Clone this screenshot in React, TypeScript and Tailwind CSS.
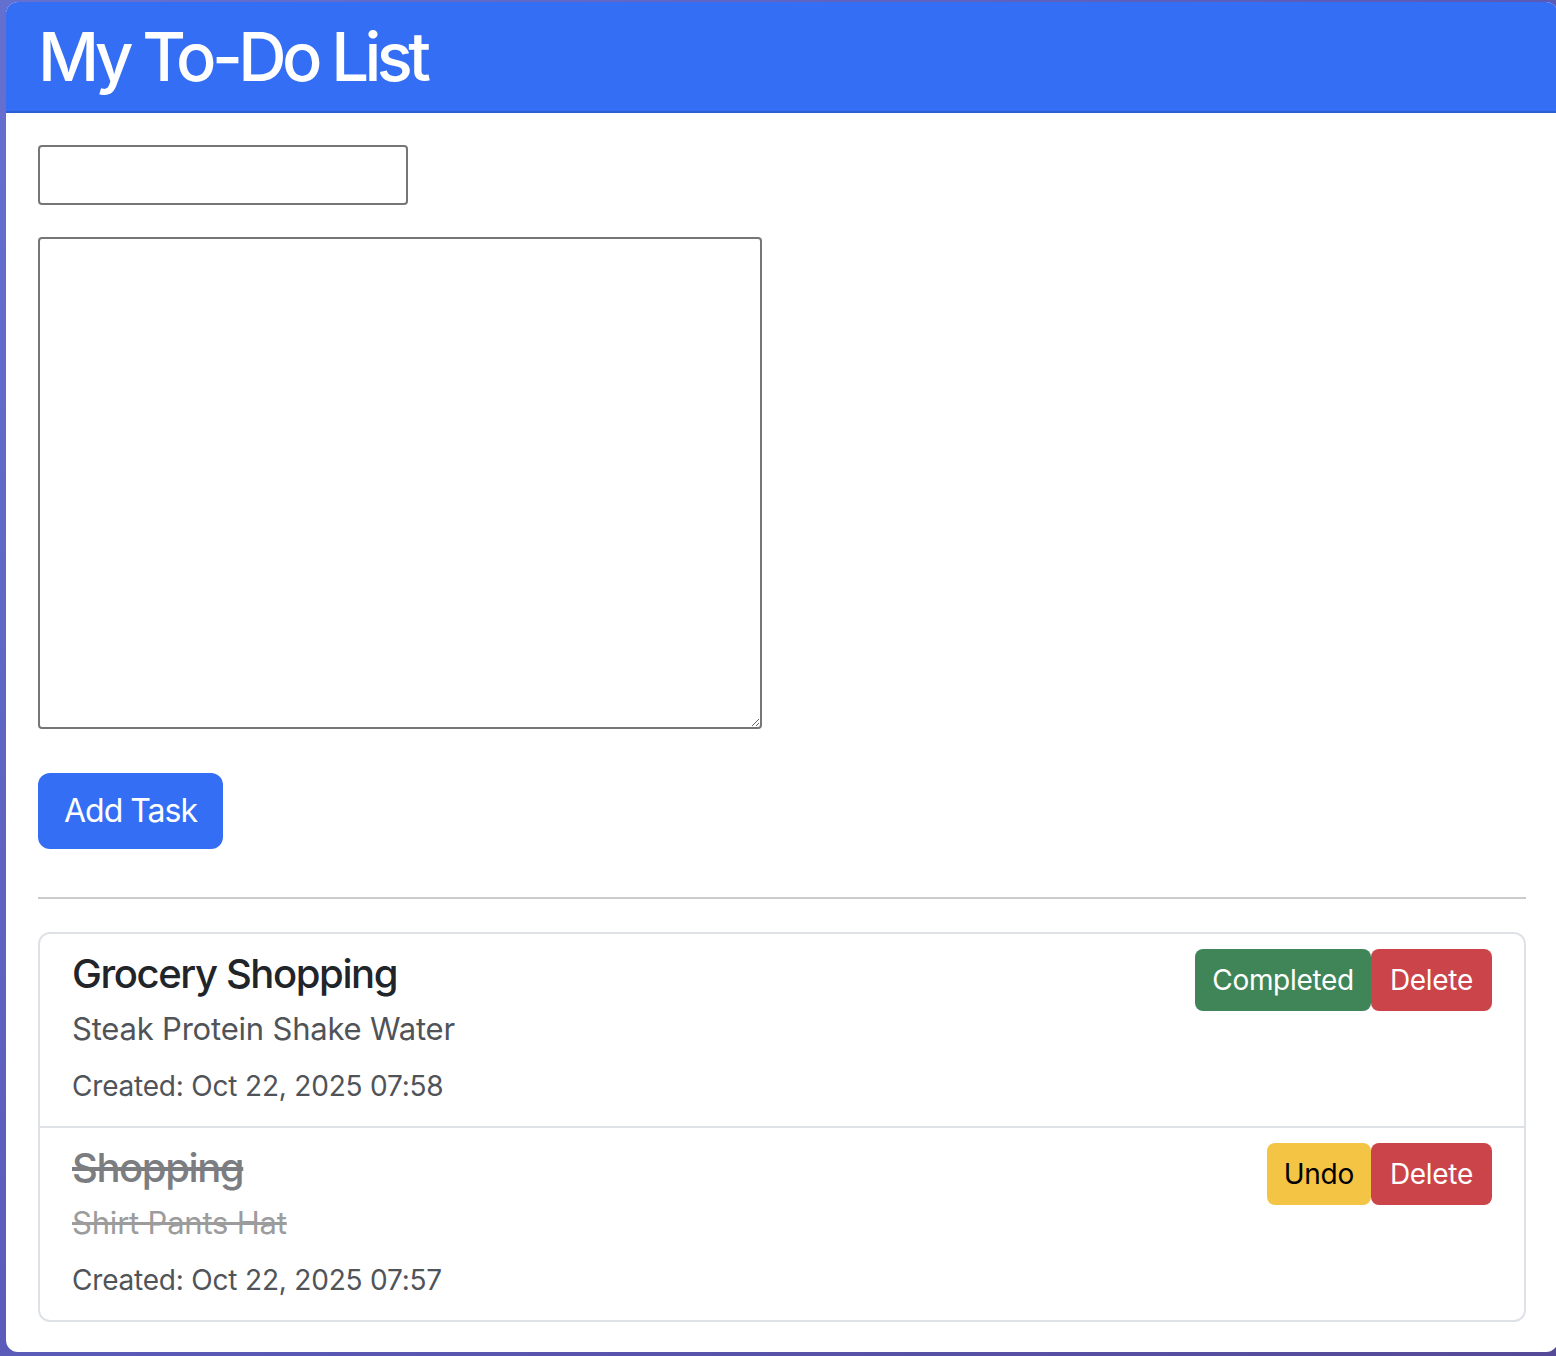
import React from "react";

const font = { fontFamily: "Inter, 'Noto Sans', sans-serif" };

function Item({
  title,
  desc,
  created,
  done,
  last,
}: {
  title: string;
  desc: string;
  created: string;
  done: boolean;
  last?: boolean;
}) {
  return (
    <div
      className={`flex justify-between px-[32px] pt-[16px] pb-[19px] ${
        last ? "" : "border-b-2 border-[#dee2e6]"
      }`}
    >
      <div className="flex flex-col">
        <div
          className={`text-[40px] leading-[48px] font-medium tracking-[-1.4px] ${
            done ? "text-[#7b7d81] line-through" : "text-[#212529]"
          }`}
        >
          {title}
        </div>
        <div
          className={`mt-[8px] text-[31px] leading-[45px] tracking-[-0.2px] ${
            done ? "text-[#9c9c9c] line-through" : "text-[#505459]"
          }`}
        >
          {desc}
        </div>
        <div className="mt-[14px] text-[28px] leading-[42px] tracking-[-0.2px] text-[#505459]">
          Created: {created}
        </div>
      </div>
      <div className="flex items-start -mt-[1px]">
        {done ? (
          <button className="h-[62px] px-[17px] rounded-[8px] bg-[#f4c444] text-black text-[28px] tracking-[-0.3px]">
            Undo
          </button>
        ) : (
          <button className="h-[62px] px-[17px] rounded-[8px] bg-[#408558] text-white text-[28px] tracking-[-0.3px]">
            Completed
          </button>
        )}
        <button className="h-[62px] px-[19px] rounded-[8px] bg-[#cb444a] text-white text-[28px] tracking-[-0.3px]">
          Delete
        </button>
      </div>
    </div>
  );
}

export default function App() {
  return (
    <div
      className="w-full h-[1356px] overflow-hidden bg-[linear-gradient(135deg,#6470d0_0%,#5a5ab8_50%,#554a98_100%)] pt-[2px] pl-[6px]"
      style={font}
    >
      <div className="w-[1552px] h-[1350px] rounded-[12px] bg-white overflow-hidden">
        <div className="h-[111px] bg-[#346ef5] border-b-2 border-[#2a5fd2] pl-[32px] pt-[15px]">
          <h1 className="text-[67px] leading-[80px] font-medium text-white tracking-[-4.6px]">
            My To-Do List
          </h1>
        </div>
        <div className="px-[32px] pt-[32px]">
          <input
            className="block w-[370px] h-[60px] border-2 border-[#767676] rounded-[4px] outline-none"
            type="text"
          />
          <textarea className="block mt-[32px] w-[724px] h-[492px] border-2 border-[#767676] rounded-[4px] outline-none" />
          <button className="block mt-[44px] w-[185px] h-[76px] rounded-[12px] bg-[#346ef5] text-white text-[32px] tracking-[-1px]">
            Add Task
          </button>
          <div className="mt-[48px] h-[2px] w-[1488px] bg-[#cbcbcb]" />
          <div className="mt-[33px] w-[1488px] border-2 border-[#dee2e6] rounded-[12px]">
            <Item
              title="Grocery Shopping"
              desc="Steak Protein Shake Water"
              created="Oct 22, 2025 07:58"
              done={false}
            />
            <Item
              title="Shopping"
              desc="Shirt Pants Hat"
              created="Oct 22, 2025 07:57"
              done={true}
              last
            />
          </div>
        </div>
      </div>
    </div>
  );
}
